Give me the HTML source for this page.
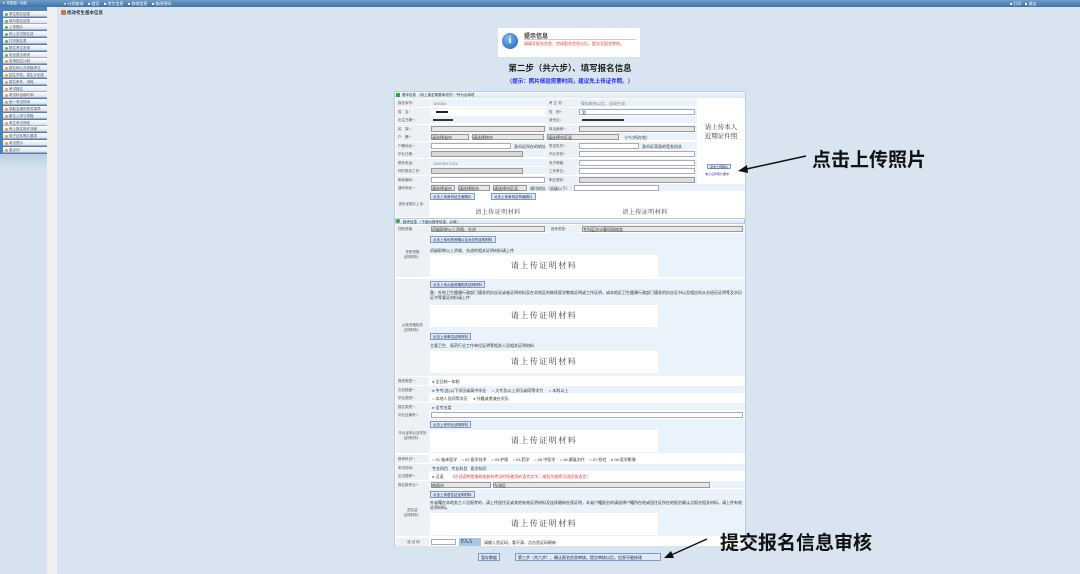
<!DOCTYPE html>
<html><head><meta charset="utf-8"><style>
*{margin:0;padding:0;box-sizing:border-box}
body{width:1080px;height:574px;overflow:hidden;background:#d8e5f0;font-family:"Liberation Sans","Noto Sans CJK SC",sans-serif;position:relative;font-size:4px;color:#333}
.a{position:absolute}
.top{left:0;top:0;width:1080px;height:7px;background:linear-gradient(#6f9cc8,#3f74aa)}
.tl{color:#fff;font-size:4px;top:1px}
.side{left:0;top:7px;width:47px;height:567px;background:#d6e3ef}
.sidehead{left:0;top:7px;width:47px;height:147px;background:#4d82ba}
.si{left:3px;width:44px;height:6px;background:linear-gradient(#fff,#d9e3ec);border-bottom:1px solid #aac;font-size:3.5px;line-height:6px;padding-left:6px;color:#555}
.si:before{content:"";position:absolute;left:2px;top:1.5px;width:3px;height:3px;border-radius:50%;background:#e9a23b}
.si.g:before{background:#6bb344}
.strip{left:47px;top:7px;width:10px;height:567px;background:#f0f0f0}
.row{left:396px;width:301px;height:8px;background:#eaf2fb;border-bottom:1px solid #fff}
.lb{position:absolute;top:0;height:8px;background:#edf0f4;font-size:3.5px;line-height:8px;padding-left:2px;color:#555}
.inp{position:absolute;height:6px;top:1px;background:#fff;border:1px solid #aab}
.sel{position:absolute;height:6px;top:1px;background:#e6e6e6;border:1px solid #999}
.btn{position:absolute;background:#dfe9f7;border:1px solid #7a9cc9;font-size:3.5px;color:#224;line-height:6px;height:7px;padding:0 2px}
.up{position:absolute;background:#fff;font-family:"Noto Serif CJK SC","Liberation Serif",serif;font-size:8px;letter-spacing:1.5px;color:#444;text-align:center}
.up.s{font-size:6px;letter-spacing:0.5px;background:transparent}
.blk{left:396px;width:349px;background:#eaf2fb;border-bottom:1px solid #fff}
.blk .lb{height:100%;width:33px;display:flex;align-items:center;justify-content:center;padding:0;text-align:center;line-height:5px}
.big{font-weight:bold;font-size:19px;color:#111}
</style></head><body>
<div class="a top"></div>
<div class="a tl" style="left:2px;font-size:3.5px">▼ 导航图 / 功能</div>
<div class="a tl" style="left:64px">● 计划查询 &nbsp;&nbsp; ■ 首页 &nbsp;&nbsp; ■ 考生信息 &nbsp;&nbsp; ■ 修改信息 &nbsp;&nbsp; ■ 修改密码</div>
<div class="a tl" style="left:1010px">■ 打印 &nbsp; ■ 退出</div>
<div class="a side"></div>
<div class="a sidehead"></div>
<div class="a si g" style="top:11px">考生报名信息</div>
<div class="a si g" style="top:18px">填写报名信息</div>
<div class="a si g" style="top:24px">上传照片</div>
<div class="a si g" style="top:31px">网上支付报名费</div>
<div class="a si g" style="top:38px">打印报名表</div>
<div class="a si g" style="top:45px">报名考生查询</div>
<div class="a si g" style="top:52px">安全退出系统</div>
<div class="a si" style="top:58px">查询招生计划</div>
<div class="a si" style="top:65px">报名和公共资格考试</div>
<div class="a si" style="top:72px">招生学校、招生计划查询</div>
<div class="a si" style="top:79px">报名条件、流程</div>
<div class="a si" style="top:86px">考试报名</div>
<div class="a si" style="top:92px">考试科目和时间</div>
<div class="a si" style="top:99px">统一考试时间</div>
<div class="a si" style="top:106px">录取及调剂有关事项</div>
<div class="a si" style="top:113px">新生入学与资格</div>
<div class="a si" style="top:120px">考生考试须知</div>
<div class="a si" style="top:126px">网上报名操作流程</div>
<div class="a si" style="top:133px">电子证件照片要求</div>
<div class="a si" style="top:140px">考试提示</div>
<div class="a si" style="top:147px">重点问</div>
<div class="a" style="left:0;top:154px;width:47px;height:14px;background:linear-gradient(#b8cde0,#d6e3ef)"></div>
<div class="a strip"></div>
<div class="a" style="left:61px;top:10px;width:5px;height:5px;background:#c74;border-radius:1px"></div>
<div class="a" style="left:67px;top:10px;font-size:4.5px;font-weight:bold;color:#234">修改考生基本信息</div>

<div class="a" style="left:498px;top:28px;width:142px;height:29px;background:#fff"></div>
<div class="a" style="left:502px;top:33px;width:16px;height:16px;border-radius:50%;background:radial-gradient(circle at 40% 35%,#7fb5f0,#1a5fb8);color:#fff;font-weight:bold;font-size:10px;text-align:center;line-height:16px;font-family:'Liberation Serif',serif">i</div>
<div class="a" style="left:524px;top:31px;font-size:6px;font-weight:bold;color:#333">提示信息</div>
<div class="a" style="left:524px;top:38.5px;width:112px;border-top:1px solid #ccc"></div>
<div class="a" style="left:524px;top:41px;width:114px;font-size:4px;line-height:5px;color:#e33">请填写报名信息，完成报名信息以后，提交至报名审核。</div>
<div class="a" style="left:395px;top:62px;width:350px;text-align:center;font-size:8.5px;font-weight:bold;color:#222">第二步（共六步）、填写报名信息</div>
<div class="a" style="left:395px;top:77px;width:350px;text-align:center;font-size:5.5px;font-weight:bold;color:#22f">（提示：照片核验需要时间，建议先上传证件照。）</div>

<div class="a" style="left:394px;top:91px;width:352px;height:455px;background:#fff;border:1px solid #b7cde2"></div>
<div class="a" style="left:395px;top:92px;width:350px;height:6px;background:linear-gradient(#f4f8fc,#dce8f3);font-size:3.5px;line-height:6px;padding-left:7px">基本信息 （网上报名需要填写的）*号为必填项</div>
<div class="a" style="left:396px;top:93px;width:4px;height:4px;background:#3a3"></div>

<div class="a row" style="top:99px"><div class="lb" style="left:0;width:33px">报名序号：</div><span style="position:absolute;left:37px;top:2px;color:#777">100000</span><div class="lb" style="left:151px;width:30px">考 生 号：</div><span style="position:absolute;left:185px;top:2px;color:#777">保存报名以后，自动生成</span></div>
<div class="a row" style="top:107.5px"><div class="lb" style="left:0;width:33px">姓　名：</div><div class="inp" style="left:35px;width:114px;border-color:#fff"></div><div class="a" style="left:40px;top:3px;width:12px;height:2px;background:#222"></div><div class="lb" style="left:151px;width:30px">性　别*：</div><div class="inp" style="left:183px;width:116px"></div><span style="position:absolute;left:186px;top:2px">男</span></div>
<div class="a row" style="top:116px"><div class="lb" style="left:0;width:33px">出生日期*：</div><div class="a" style="left:37px;top:3px;width:20px;height:2px;background:#333"></div><div class="lb" style="left:151px;width:30px">身份证：</div><div class="a" style="left:186px;top:3px;width:42px;height:2px;background:#333"></div></div>
<div class="a row" style="top:124.5px"><div class="lb" style="left:0;width:33px">民　族*：</div><div class="sel" style="left:35px;width:114px"></div><div class="lb" style="left:151px;width:30px">政治面貌*：</div><div class="sel" style="left:183px;width:116px"></div></div>
<div class="a row" style="top:133px"><div class="lb" style="left:0;width:33px">户　籍*：</div><div class="sel" style="left:35px;width:38px">请选择省市</div><div class="sel" style="left:76px;width:72px">请选择地市</div><div class="sel" style="left:151px;width:72px">请选择市区县</div><span style="position:absolute;left:226px;top:2px">（户口所在地）</span></div>
<div class="a row" style="top:141.5px"><div class="lb" style="left:0;width:33px">户籍地址*：</div><div class="inp" style="left:35px;width:80px"></div><span style="position:absolute;left:118px;top:2px">身份证所在的地址</span><div class="lb" style="left:151px;width:30px">签证机关*：</div><div class="inp" style="left:183px;width:60px"></div><span style="position:absolute;left:246px;top:2px">身份证背面的签发机关</span></div>
<div class="a row" style="top:150px"><div class="lb" style="left:0;width:33px">毕业日期：</div><div class="sel" style="left:35px;width:92px;background:#d8d8d8"></div><div class="lb" style="left:151px;width:30px">毕业学校*：</div><div class="inp" style="left:183px;width:116px"></div></div>
<div class="a row" style="top:158.5px"><div class="lb" style="left:0;width:33px">联系电话：</div><span style="position:absolute;left:37px;top:2px;color:#777">13979017123</span><div class="lb" style="left:151px;width:30px">电子邮箱：</div><div class="inp" style="left:183px;width:116px"></div></div>
<div class="a row" style="top:167px"><div class="lb" style="left:0;width:33px">何时参加工作：</div><div class="sel" style="left:35px;width:92px;background:#d8d8d8"></div><div class="lb" style="left:151px;width:30px">工作单位：</div><div class="inp" style="left:183px;width:116px"></div></div>
<div class="a row" style="top:175.5px"><div class="lb" style="left:0;width:33px">邮政编码：</div><div class="inp" style="left:35px;width:114px"></div><div class="lb" style="left:151px;width:30px">职业类别：</div><div class="sel" style="left:183px;width:116px;background:#ddd"></div></div>
<div class="a" style="left:697px;top:99px;width:48px;height:85px;background:#fff"></div>
<div class="a" style="left:697px;top:122px;width:48px;text-align:center;font-family:'Noto Serif CJK SC','Liberation Serif',serif;font-size:6.5px;line-height:9px;color:#333">请上传本人<br>近期证件照</div>
<div class="btn" style="left:707px;top:164px;height:5px;line-height:5px;font-size:3px">点击上传照片</div>
<div class="a" style="left:705px;top:172px;font-size:3px;color:#33a">电子证件照片要求</div>
<div class="a row" style="top:184px;width:349px"><div class="lb" style="left:0;width:33px">通讯地址*：</div><div class="sel" style="left:35px;width:24px">请选择省市</div><div class="sel" style="left:62px;width:32px">请选择地市</div><div class="sel" style="left:97px;width:34px">请选择市区县</div><span style="position:absolute;left:134px;top:2px">通讯地址（县级以下）：</span><div class="inp" style="left:178px;width:85px"></div></div>
<div class="a blk" style="top:192px;height:26px;background:#fff"><div class="lb">身份证照片上传：</div></div>
<div class="btn" style="left:430px;top:193px">点击上传身份证正面照片</div>
<div class="btn" style="left:491px;top:193px">点击上传身份证背面照片</div>
<div class="up s" style="left:448px;top:207px;width:100px">请上传证明材料</div>
<div class="up s" style="left:595px;top:207px;width:100px">请上传证明材料</div>

<div class="a" style="left:395px;top:218px;width:350px;height:6px;background:linear-gradient(#f4f8fc,#dce8f3);font-size:3.5px;line-height:6px;padding-left:7px;border:1px solid #b7cde2">报考信息 （下面为报考信息，必填）</div>
<div class="a" style="left:396px;top:219px;width:4px;height:4px;background:#3a3;border-radius:50%"></div>
<div class="a row" style="top:225px;width:349px"><div class="lb" style="left:0;width:33px">任职资格：</div><div class="sel" style="left:35px;width:114px">初级职称以上资格、先进</div><div class="lb" style="left:153px;width:30px">报考类型：</div><div class="sel" style="left:186px;width:161px">专科层次计算机网络类</div></div>
<div class="a blk" style="top:233px;height:45px"><div class="lb">任职资格<br>证明材料：</div></div>
<div class="btn" style="left:430px;top:236px">点击上传优秀资格以及对应的证明材料</div>
<div class="a" style="left:430px;top:248px">初级职称以上资格、先进的相关证明材料请上传</div>
<div class="up" style="left:430px;top:255px;width:228px;height:22px;line-height:22px">请上传证明材料</div>
<div class="a blk" style="top:279px;height:98px"><div class="lb">从医资格相关<br>证明材料：</div></div>
<div class="btn" style="left:430px;top:281px">点击上传从医资格相关证明材料</div>
<div class="a" style="left:430px;top:290px;width:312px;line-height:5px">备：外地卫生健康行政部门颁发的执业证或者证明材料及在本地区的继续医学教育证明或工作证明，或本地区卫生健康行政部门颁发的执业证书以及相应的从业经历证明等及学历证书等要证材料请上传</div>
<div class="up" style="left:430px;top:305px;width:228px;height:22px;line-height:22px">请上传证明材料</div>
<div class="btn" style="left:430px;top:333px">点击上传单位证明材料</div>
<div class="a" style="left:430px;top:343px">主要卫生、医药行业工作单位证明等相关人员相关证明材料</div>
<div class="up" style="left:430px;top:351px;width:228px;height:22px;line-height:22px">请上传证明材料</div>

<div class="a row" style="top:377px;width:349px;background:#fff"><div class="lb" style="left:0;width:33px">报考类型*：</div><span style="position:absolute;left:36px;top:2px"><span style="color:#26c">●</span> 全日制一年制</span></div>
<div class="a row" style="top:385.5px;width:349px"><div class="lb" style="left:0;width:33px">文化程度*：</div><span style="position:absolute;left:36px;top:2px"><span style="color:#26c">●</span> 中专(含)以下学历或高中毕业 &nbsp;&nbsp;&nbsp; ○ 大专及以上学历或同等学力 &nbsp;&nbsp;&nbsp; ○ 本科以上</span></div>
<div class="a row" style="top:394px;width:349px;background:#fff"><div class="lb" style="left:0;width:33px">毕业类别*：</div><span style="position:absolute;left:36px;top:2px">○ 本地人员同等学历 &nbsp;&nbsp;&nbsp; <span style="color:#26c">●</span> 外籍或港澳台学历</span></div>
<div class="a row" style="top:402.5px;width:349px"><div class="lb" style="left:0;width:33px">报名类别*：</div><span style="position:absolute;left:36px;top:2px"><span style="color:#26c">●</span> 全专业类</span></div>
<div class="a row" style="top:411px;width:349px;background:#fff"><div class="lb" style="left:0;width:33px">毕业证编号*：</div><div class="inp" style="left:35px;width:312px"></div></div>
<div class="a blk" style="top:419px;height:35px"><div class="lb">毕业证明以及学历<br>证明材料：</div></div>
<div class="btn" style="left:430px;top:421px">点击上传毕业证明材料</div>
<div class="up" style="left:430px;top:430px;width:228px;height:22px;line-height:22px">请上传证明材料</div>
<div class="a row" style="top:455px;width:349px;background:#fff"><div class="lb" style="left:0;width:33px">报考科目*：</div><span style="position:absolute;left:36px;top:2px">○ 01.临床医学 &nbsp;&nbsp; ○ 02.医学技术 &nbsp;&nbsp; ○ 03.护理 &nbsp;&nbsp; ○ 04.药学 &nbsp;&nbsp; ○ 05.中医学 &nbsp;&nbsp; ○ 06.康复治疗 &nbsp;&nbsp; ○ 07.检验 &nbsp;&nbsp; <span style="color:#26c">●</span> 08.医学影像</span></div>
<div class="a row" style="top:463.5px;width:349px"><div class="lb" style="left:0;width:33px">考试时间：</div><span style="position:absolute;left:36px;top:2px">专业科目 &nbsp; 专业科目 &nbsp; 医学知识</span></div>
<div class="a row" style="top:472px;width:349px;background:#fff"><div class="lb" style="left:0;width:33px">应试语种*：</div><span style="position:absolute;left:36px;top:2px"><span style="color:#26c">●</span> 汉语 &nbsp;&nbsp;&nbsp;&nbsp; <span style="color:#e33">（应试语种是指参加各科考试时所使用的语言文字，维吾尔族等可选民族语言）</span></span></div>
<div class="a row" style="top:480.5px;width:349px"><div class="lb" style="left:0;width:33px">报名报考点*：</div><div class="sel" style="left:35px;width:60px">南昌市</div><div class="sel" style="left:97px;width:217px">东湖区</div></div>
<div class="a blk" style="top:489px;height:48px"><div class="lb">居住证<br>证明材料：</div></div>
<div class="btn" style="left:430px;top:491px">点击上传居住证证明材料</div>
<div class="a" style="left:430px;top:500px;width:312px;line-height:5px">外省籍在本地务工人员报考的，请上传居住证或其他有效证明材料及连续缴纳社保证明，本省户籍报名的请选择户籍所在地或居住证所在地报名确认点报名相关材料，请上传有效证明材料。</div>
<div class="up" style="left:430px;top:513px;width:228px;height:22px;line-height:22px">请上传证明材料</div>
<div class="a row" style="top:538px;width:349px;background:#fff"><div class="lb" style="left:0;width:33px;text-align:center">验 证 码</div><div class="inp" style="left:35px;width:25px"></div><div class="a" style="left:63px;top:0;width:22px;height:8px;background:#aac5dc;color:#246;font-family:'Liberation Serif',serif;font-size:6px;line-height:8px;padding-left:2px">FAA</div><span style="position:absolute;left:88px;top:2px">请输入验证码，看不清，点击验证码刷新</span></div>

<div class="btn" style="left:478px;top:553px;height:8px;line-height:8px;font-size:4px">暂存数据</div>
<div class="btn" style="left:515px;top:553px;height:8px;line-height:8px;font-size:4px;width:146px">第三步（共六步）、确认报名信息审核。提交审核以后，信息不能修改</div>

<svg class="a" style="left:0;top:0" width="1080" height="574">
<line x1="806" y1="156" x2="742" y2="170" stroke="#111" stroke-width="1.5"/>
<polygon points="738,171 747,165 748,173" fill="#111"/>
<line x1="707" y1="539" x2="669" y2="556" stroke="#111" stroke-width="1.5"/>
<polygon points="664,558 671,551 674,558" fill="#111"/>
</svg>
<div class="a big" style="left:812px;top:145px">点击上传照片</div>
<div class="a big" style="left:720px;top:528px">提交报名信息审核</div>
</body></html>
